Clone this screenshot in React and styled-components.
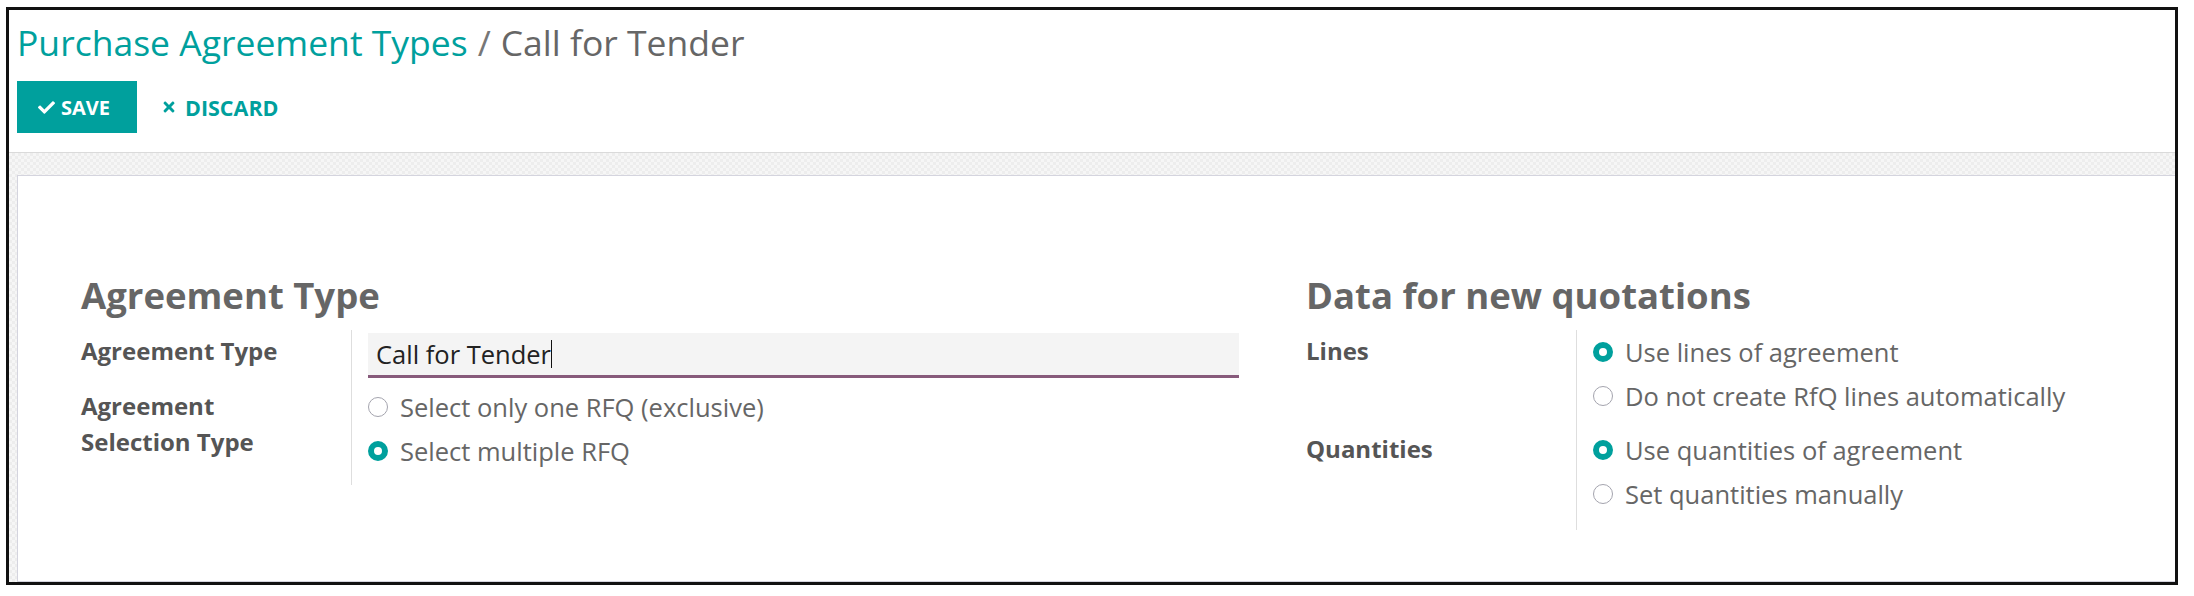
import React from 'react'
import styled, { createGlobalStyle } from 'styled-components'
import { FaCheck, FaTimes } from 'react-icons/fa'

const TEAL = '#00a09d'

const GROUPS = [
  {
    title: 'Agreement Type',
    rows: [
      { label: 'Agreement Type', input: 'Call for Tender', pb: 7 },
      {
        label: 'Agreement Selection Type',
        pb: 12,
        options: [
          { text: 'Select only one RFQ (exclusive)' },
          { text: 'Select multiple RFQ', checked: true },
        ],
      },
    ],
  },
  {
    title: 'Data for new quotations',
    rows: [
      {
        label: 'Lines',
        pb: 10,
        options: [
          { text: 'Use lines of agreement', checked: true },
          { text: 'Do not create RfQ lines automatically' },
        ],
      },
      {
        label: 'Quantities',
        pb: 14,
        options: [
          { text: 'Use quantities of agreement', checked: true },
          { text: 'Set quantities manually' },
        ],
      },
    ],
  },
]

const App = () => (
  <>
    <GlobalStyle />
    <Frame>
      <ControlPanel>
        <Breadcrumb>
          <Crumb>Purchase Agreement Types</Crumb>
          <Slash>/</Slash>
          <span>Call for Tender</span>
        </Breadcrumb>
        <Buttons>
          <SaveButton>
            <FaCheck size={17} />
            SAVE
          </SaveButton>
          <DiscardButton>
            <FaTimes size={16} />
            DISCARD
          </DiscardButton>
        </Buttons>
      </ControlPanel>
      <FormView>
        <Sheet>
          {GROUPS.map(group => (
            <Group key={group.title}>
              <GroupTitle>{group.title}</GroupTitle>
              {group.rows.map(row => (
                <FieldRow key={row.label}>
                  <Label>{row.label}</Label>
                  <FieldCell $pb={row.pb}>
                    {row.input && (
                      <TextInput>
                        {row.input}
                        <Caret />
                      </TextInput>
                    )}
                    {row.options &&
                      row.options.map(opt => (
                        <Option key={opt.text}>
                          <Radio $checked={opt.checked} />
                          {opt.text}
                        </Option>
                      ))}
                  </FieldCell>
                </FieldRow>
              ))}
            </Group>
          ))}
        </Sheet>
      </FormView>
    </Frame>
  </>
)

const GlobalStyle = createGlobalStyle`
  body {
    margin: 0;
    background: #fff;
    font-family: 'Open Sans', 'Liberation Sans', sans-serif;
  }
`

const Frame = styled.div`
  box-sizing: border-box;
  width: 2172px;
  height: 578px;
  margin: 7px 0 0 6px;
  border: 3px solid #111;
  overflow: hidden;
  display: flex;
  flex-direction: column;
`

const ControlPanel = styled.div`
  display: flex;
  flex-direction: column;
  gap: 19px;
  padding: 12px 8px 19px;
`

const Breadcrumb = styled.div`
  font-size: 35.5px;
  line-height: 40px;
  color: #666;
  white-space: nowrap;
`

const Crumb = styled.span`
  color: ${TEAL};
`

const Slash = styled.span`
  margin: 0 10px;
  color: #777;
`

const Buttons = styled.div`
  display: flex;
  align-items: center;
  gap: 24px;
`

const SaveButton = styled.div`
  box-sizing: border-box;
  display: flex;
  align-items: center;
  gap: 6px;
  width: 120px;
  height: 52px;
  padding-left: 21px;
  background: ${TEAL};
  color: #fff;
  font-size: 20px;
  font-weight: 700;
`

const DiscardButton = styled.div`
  display: flex;
  align-items: center;
  gap: 8px;
  color: ${TEAL};
  font-size: 21.5px;
  font-weight: 700;
`

const FormView = styled.div`
  flex: 1;
  display: flex;
  padding: 22px 0 0 8px;
  border-top: 1px solid #dadada;
  background-color: #f2f2f2;
  background-image: repeating-conic-gradient(#ededed 0 25%, #f6f6f6 0 50%);
  background-size: 6px 6px;
  overflow: hidden;
`

const Sheet = styled.div`
  flex-shrink: 0;
  display: flex;
  gap: 67px;
  width: 2400px;
  padding: 99px 0 0 63px;
  background: #fff;
  border: 1px solid #d4d4de;
`

const Group = styled.div`
  flex-shrink: 0;
  width: 1158px;
`

const GroupTitle = styled.h2`
  margin: 0 0 15px;
  font-size: 36.5px;
  line-height: 40px;
  font-weight: 700;
  color: #666;
`

const FieldRow = styled.div`
  display: grid;
  grid-template-columns: 270px 1fr;
`

const Label = styled.div`
  padding-top: 3px;
  padding-right: 40px;
  font-size: 24px;
  line-height: 36px;
  font-weight: 700;
  color: #555;
`

const FieldCell = styled.div`
  border-left: 1px solid #dedede;
  padding: 0 0 ${props => props.$pb}px 16px;
`

const TextInput = styled.div`
  box-sizing: border-box;
  display: flex;
  align-items: center;
  height: 45px;
  margin-top: 3px;
  padding: 0 8px;
  background: #f4f4f4;
  border-bottom: 3px solid #875a7b;
  font-size: 25.5px;
  color: #222;
`

const Caret = styled.span`
  width: 1px;
  height: 28px;
  background: #111;
`

const Option = styled.div`
  display: flex;
  align-items: center;
  gap: 12px;
  height: 44px;
  font-size: 25.5px;
  color: #666;
  white-space: nowrap;
`

const Radio = styled.span`
  box-sizing: border-box;
  flex-shrink: 0;
  width: 20px;
  height: 20px;
  border-radius: 50%;
  background: #fff;
  border: ${props => (props.$checked ? `6px solid ${TEAL}` : '1.5px solid #a4a4ae')};
`

export default App
